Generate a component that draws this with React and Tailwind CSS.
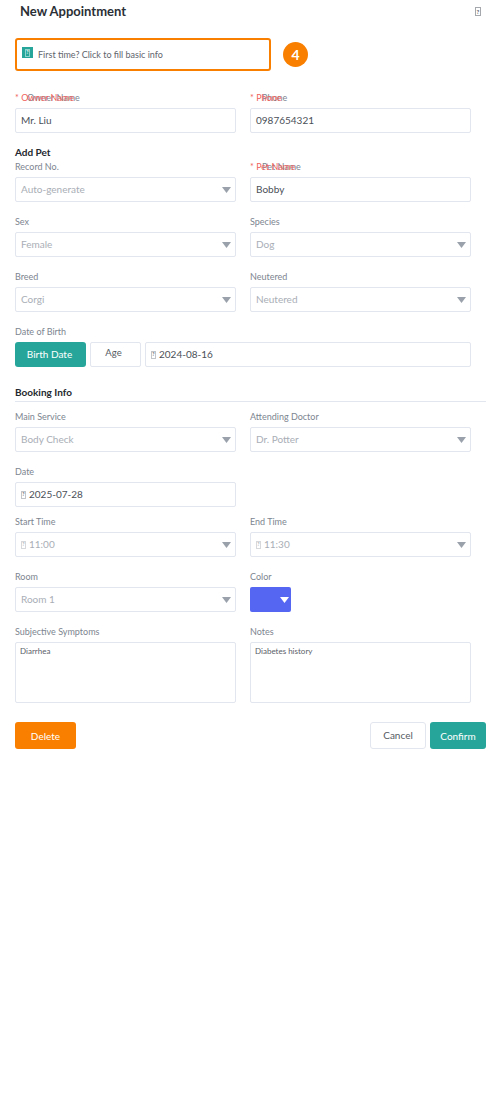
const inputBox = "h-[25px] w-full flex items-center px-[5px] bg-white border border-[#e2e6ee] rounded-[2px] text-[10px]";

// the little box the browser shows for a glyph it doesn't have
function Tofu({ className = "mr-[3px] border-[#c2c5ca] text-[#60656c]" }) {
  return (
    <span className={`shrink-0 flex items-center justify-center w-[5px] h-2 border text-[5px] font-bold leading-none ${className}`}>
      ?
    </span>
  );
}

function Label({ children, required }) {
  if (required) {
    return (
      <div className="relative h-4 pl-3 text-[9px] leading-[11px] text-[#7d8590]">
        <span className="absolute left-0 top-0 text-[#f0625c]">* {children}</span>
        {children}
      </div>
    );
  }
  return <div className="h-4 text-[9px] leading-[11px] text-[#7d8590]">{children}</div>;
}

function Arrow({ className }) {
  return (
    <svg width="9" height="6" viewBox="0 0 9 6" className={className}>
      <path d="M0 0h9L4.5 6z" fill="currentColor" />
    </svg>
  );
}

function TextField({ label, required, value, icon }) {
  return (
    <div>
      <Label required={required}>{label}</Label>
      <div className={`${inputBox} text-[#4b5058]`}>
        {icon && <Tofu />}
        {value}
      </div>
    </div>
  );
}

function SelectField({ label, value, icon }) {
  return (
    <div>
      <Label>{label}</Label>
      <div className={`${inputBox} pr-1 text-[#a9aeb6]`}>
        {icon && <Tofu className="mr-[3px] border-[#d6d8dc] text-[#a9aeb6]" />}
        <span className="mr-auto">{value}</span>
        <Arrow className="text-[#9aa1ab]" />
      </div>
    </div>
  );
}

function AreaField({ label, value }) {
  return (
    <div>
      <Label>{label}</Label>
      <div className="h-[61px] w-full px-1 pt-[3px] bg-white border border-[#e2e6ee] rounded-[2px] text-[8px] leading-[10px] text-[#5a6068]">
        {value}
      </div>
    </div>
  );
}

export default function App() {
  return (
    <div className="w-[500px] h-[1100px] bg-white pl-[15px] pr-[14px] font-['Lato',sans-serif]">
      <header className="h-[38px] flex items-start justify-between pl-[5px] pr-[5px] pt-[3px]">
        <h1 className="text-[13px] leading-[16px] font-bold text-[#2b2f36]">New Appointment</h1>
        <span className="mt-1 w-[6px] h-[9px] flex items-center justify-center border border-[#a5a8ad] text-[6px] font-bold leading-none text-[#55595f]">?</span>
      </header>

      <div className="flex items-center gap-3">
        <button className="h-[33px] w-[256px] flex items-center gap-[5px] pl-[5px] border-2 border-[#f97f00] rounded-[3px] text-[9px] text-[#5f656d]">
          <span className="w-[11px] h-[11px] -mt-1 flex items-center justify-center bg-[#26a69a]">
            <Tofu className="border-[#8fd3cc] text-white" />
          </span>
          First time? Click to fill basic info
        </button>
        <span className="w-[25px] h-[25px] flex items-center justify-center rounded-full bg-[#f97f00] text-[14px] font-bold text-white">4</span>
      </div>

      <div className="mt-[21px] grid grid-cols-[221px_221px] gap-x-[14px]">
        <TextField label="Owner Name" required value="Mr. Liu" />
        <TextField label="Phone" required value="0987654321" />
      </div>

      <h2 className="mt-[13px] h-[15px] text-[10px] leading-[12px] font-bold text-[#23272e]">Add Pet</h2>

      <div className="grid grid-cols-[221px_221px] gap-x-[14px] gap-y-[14px]">
        <SelectField label="Record No." value="Auto-generate" />
        <TextField label="Pet Name" required value="Bobby" />
        <SelectField label="Sex" value="Female" />
        <SelectField label="Species" value="Dog" />
        <SelectField label="Breed" value="Corgi" />
        <SelectField label="Neutered" value="Neutered" />
      </div>

      <div className="mt-[14px]">
        <Label>Date of Birth</Label>
        <div className="flex gap-1 w-[456px]">
          <button className="h-[25px] w-[71px] pr-[2px] rounded-[3px] bg-[#26a69a] text-[10px] text-white">Birth Date</button>
          <button className="h-[25px] w-[51px] pb-[2px] pr-1 border border-[#e2e6ee] rounded-[2px] text-[9.5px] text-[#555b63]">Age</button>
          <div className={`${inputBox} flex-1 text-[#4b5058]`}>
            <Tofu />
            2024-08-16
          </div>
        </div>
      </div>

      <div className="mt-[19px] h-[16px] border-b border-[#e2e6ee] text-[10px] leading-[12px] font-bold text-[#23272e]">Booking Info</div>

      <div className="mt-[9px] grid grid-cols-[221px_221px] gap-x-[14px] gap-y-[14px]">
        <SelectField label="Main Service" value="Body Check" />
        <SelectField label="Attending Doctor" value="Dr. Potter" />
        <TextField label="Date" icon value="2025-07-28" />
        <div />
      </div>

      <div className="mt-[9px] grid grid-cols-[221px_221px] gap-x-[14px] gap-y-[14px]">
        <SelectField label="Start Time" icon value="11:00" />
        <SelectField label="End Time" icon value="11:30" />
        <SelectField label="Room" value="Room 1" />
        <div>
          <Label>Color</Label>
          <div className="h-[25px] w-[41px] flex items-center justify-end pr-[2px] rounded-[2px] bg-[#5566f2]">
            <Arrow className="text-white" />
          </div>
        </div>
        <AreaField label="Subjective Symptoms" value="Diarrhea" />
        <AreaField label="Notes" value="Diabetes history" />
      </div>

      <div className="mt-[19px] flex items-center gap-1">
        <button className="h-[27px] w-[61px] mr-auto pt-[2px] rounded-[3px] bg-[#f97f00] text-[10px] text-white">Delete</button>
        <button className="h-[27px] w-[56px] pb-[1px] border border-[#e2e6ee] rounded-[3px] text-[10px] text-[#555b63]">Cancel</button>
        <button className="h-[27px] w-[56px] pt-[1px] rounded-[3px] bg-[#26a69a] text-[10px] text-white">Confirm</button>
      </div>
    </div>
  );
}
